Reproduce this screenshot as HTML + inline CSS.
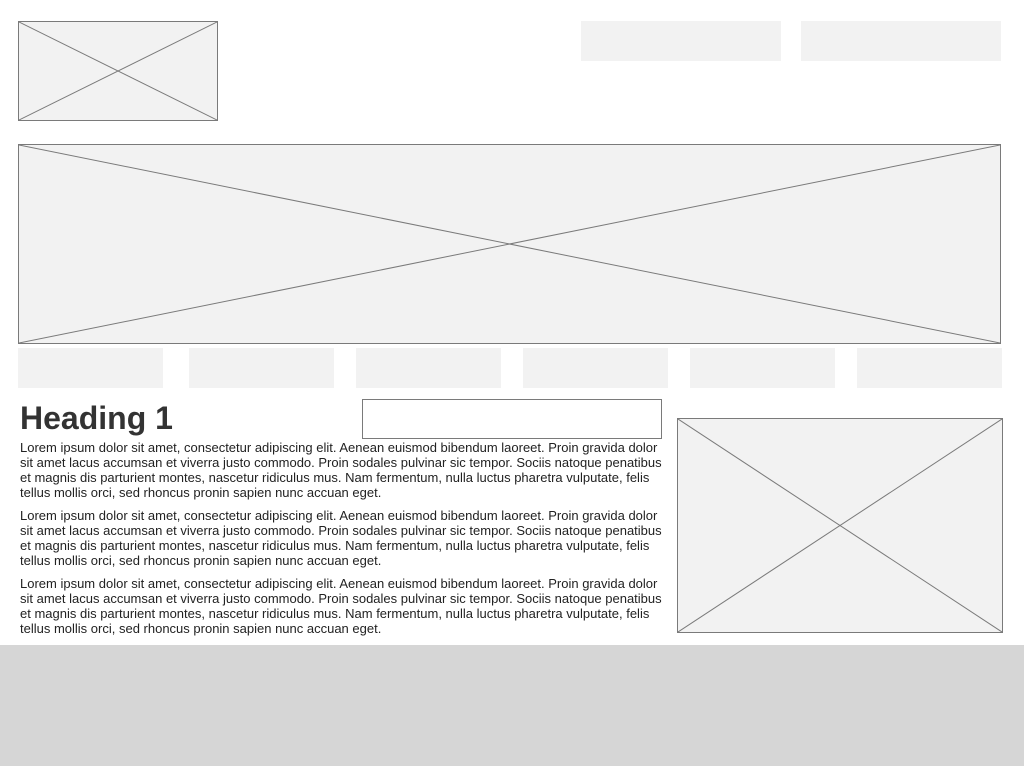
<!DOCTYPE html>
<html><head><style>
*{margin:0;padding:0;box-sizing:border-box}
body{width:1024px;height:766px;background:#fff;position:relative;overflow:hidden;font-family:"Liberation Sans",Arial,sans-serif}
.ph{position:absolute;background:#f2f2f2;border:1px solid #7a7a7a}
.ph svg{position:absolute;left:0;top:0;width:100%;height:100%}
.bx{position:absolute;background:#f2f2f2}
p{position:absolute;left:20px;font-size:13px;line-height:15px;color:#222;white-space:nowrap;letter-spacing:0}
</style></head><body>
<div class="ph" style="left:18px;top:21px;width:200px;height:100px"><svg preserveAspectRatio="none" viewBox="0 0 100 100"><line x1="0" y1="0" x2="100" y2="100" stroke="#7a7a7a" vector-effect="non-scaling-stroke"/><line x1="100" y1="0" x2="0" y2="100" stroke="#7a7a7a" vector-effect="non-scaling-stroke"/></svg></div>
<div class="bx" style="left:581px;top:21px;width:200px;height:40px"></div>
<div class="bx" style="left:801px;top:21px;width:200px;height:40px"></div>
<div class="ph" style="left:18px;top:144px;width:983px;height:200px"><svg preserveAspectRatio="none" viewBox="0 0 100 100"><line x1="0" y1="0" x2="100" y2="100" stroke="#7a7a7a" vector-effect="non-scaling-stroke"/><line x1="100" y1="0" x2="0" y2="100" stroke="#7a7a7a" vector-effect="non-scaling-stroke"/></svg></div>
<div class="bx" style="left:18px;top:348px;width:145px;height:40px"></div>
<div class="bx" style="left:189px;top:348px;width:145px;height:40px"></div>
<div class="bx" style="left:356px;top:348px;width:145px;height:40px"></div>
<div class="bx" style="left:523px;top:348px;width:145px;height:40px"></div>
<div class="bx" style="left:690px;top:348px;width:145px;height:40px"></div>
<div class="bx" style="left:857px;top:348px;width:145px;height:40px"></div>
<div style="position:absolute;left:20px;top:399px;font-size:32px;font-weight:bold;color:#333;line-height:38px">Heading 1</div>
<div style="position:absolute;left:362px;top:399px;width:300px;height:40px;border:1px solid #7a7a7a;background:#fff"></div>
<div class="ph" style="left:677px;top:418px;width:326px;height:215px"><svg preserveAspectRatio="none" viewBox="0 0 100 100"><line x1="0" y1="0" x2="100" y2="100" stroke="#7a7a7a" vector-effect="non-scaling-stroke"/><line x1="100" y1="0" x2="0" y2="100" stroke="#7a7a7a" vector-effect="non-scaling-stroke"/></svg></div>
<p style="top:440px">Lorem ipsum dolor sit amet, consectetur adipiscing elit. Aenean euismod bibendum laoreet. Proin gravida dolor<br>sit amet lacus accumsan et viverra justo commodo. Proin sodales pulvinar sic tempor. Sociis natoque penatibus<br>et magnis dis parturient montes, nascetur ridiculus mus. Nam fermentum, nulla luctus pharetra vulputate, felis<br>tellus mollis orci, sed rhoncus pronin sapien nunc accuan eget.</p>
<p style="top:508px">Lorem ipsum dolor sit amet, consectetur adipiscing elit. Aenean euismod bibendum laoreet. Proin gravida dolor<br>sit amet lacus accumsan et viverra justo commodo. Proin sodales pulvinar sic tempor. Sociis natoque penatibus<br>et magnis dis parturient montes, nascetur ridiculus mus. Nam fermentum, nulla luctus pharetra vulputate, felis<br>tellus mollis orci, sed rhoncus pronin sapien nunc accuan eget.</p>
<p style="top:576px">Lorem ipsum dolor sit amet, consectetur adipiscing elit. Aenean euismod bibendum laoreet. Proin gravida dolor<br>sit amet lacus accumsan et viverra justo commodo. Proin sodales pulvinar sic tempor. Sociis natoque penatibus<br>et magnis dis parturient montes, nascetur ridiculus mus. Nam fermentum, nulla luctus pharetra vulputate, felis<br>tellus mollis orci, sed rhoncus pronin sapien nunc accuan eget.</p>
<div style="position:absolute;left:0;top:645px;width:1024px;height:121px;background:#d6d6d6"></div>
</body></html>
